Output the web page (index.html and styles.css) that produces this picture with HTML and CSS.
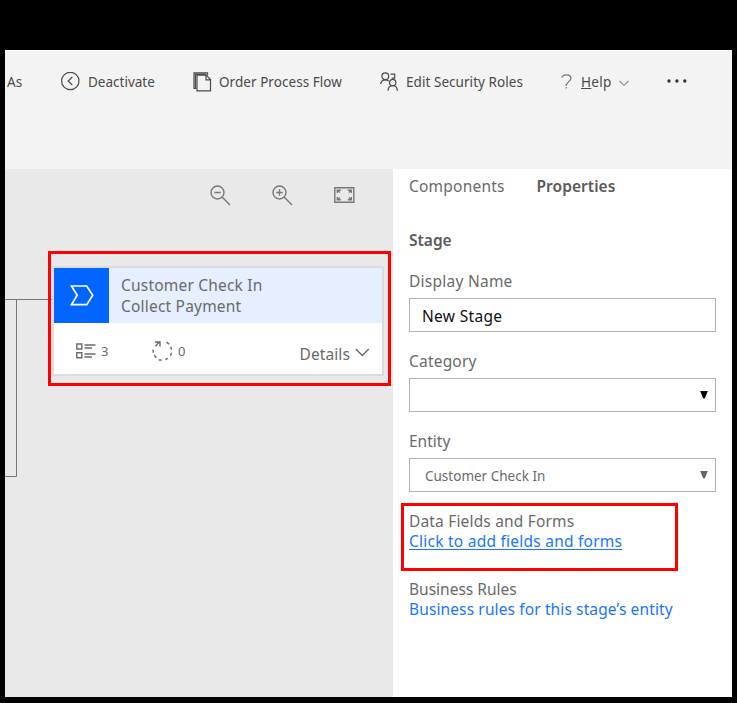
FILE: index.html
```html
<!DOCTYPE html>
<html lang="en">
<head>
<meta charset="utf-8">
<title>Business process flow</title>
<link rel="stylesheet" href="styles.css">
</head>
<body>
<div class="window">
  <header class="toolbar">
    <div class="command"><span class="t-as">As</span></div>
    <div class="command">
      <svg class="icon" width="20" height="20" viewBox="0 0 20 20"><circle cx="9.3" cy="9" r="8.7"/><path d="M11.3 5 7.2 9l4.1 4"/></svg>
      <span class="t-deactivate">Deactivate</span>
    </div>
    <div class="command">
      <svg class="icon" width="19" height="20" viewBox="0 0 19 20"><path d="M3.500 16.500H1V.8h13.500v2.400M2.500 16V2.300h10.500"/><path d="M4 18.500V3.200h9.200l4.300 4.300v11.300H4zM13 3.200v4.600h4.500"/></svg>
      <span class="t-order">Order Process Flow</span>
    </div>
    <div class="command">
      <svg class="icon" width="19" height="20" viewBox="0 0 19 20"><circle cx="5.3" cy="4.3" r="3.4"/><path d="M.7 12C1 9.500 2.800 7.800 5.300 7.800c1.500 0 2.500.4 3.400 1.300M10.500 2.200h4.200v4h-3"/><circle cx="12.700" cy="10.500" r="3.200"/><path d="M8 18.700c.2-3 2-5 4.700-5s4.500 2 4.700 5"/></svg>
      <span class="t-edit">Edit Security Roles</span>
    </div>
    <div class="command help">
      <svg class="icon soft" width="11" height="16" viewBox="0 0 11 16"><path d="M.8 3.600C1.500 1.700 3.200.8 5.300.8c2.700 0 4.600 1.400 4.600 3.500C9.900 7.800 5.200 7.500 5.200 12M5.200 13v1.500"/></svg>
      <span class="t-help"><u>H</u>elp</span>
      <svg class="icon faint" width="10" height="7" viewBox="0 0 10 7"><path d="m.5 1 4.500 4.500L9.500 1"/></svg>
    </div>
    <div class="command more"><svg width="21" height="4" viewBox="0 0 21 4"><circle cx="2" cy="2" r="1.700"/><circle cx="9.900" cy="2" r="1.700"/><circle cx="17.800" cy="2" r="1.700"/></svg></div>
  </header>
  <main class="workspace">
    <section class="canvas">
      <div class="zoom-tools">
        <svg class="icon" width="21" height="21" viewBox="0 0 21 21"><circle cx="7.500" cy="7.500" r="6.500"/><path d="M4.300 7.500h6.400M12.300 12.300l7.700 7.700"/></svg>
        <svg class="icon" width="21" height="21" viewBox="0 0 21 21"><circle cx="7.500" cy="7.500" r="6.500"/><path d="M4.300 7.500h6.400M7.500 4.300v6.400M12.300 12.300l7.700 7.700"/></svg>
        <svg class="icon fit" width="21" height="16" viewBox="0 0 21 16"><path d="M.8.800h19v14.400H.8z"/><path d="M3.300 6V3.300h3.500M3.300 3.300l2.500 2.200M13.800 3.300h3.500V6M17.300 3.300l-2.500 2.200M3.300 10v2.700h3.500M3.300 12.700l2.500-2.200M13.800 12.700h3.500V10M17.300 12.700l-2.500-2.200"/></svg>
      </div>
      <svg class="connector" width="48" height="179" viewBox="0 0 48 179"><path d="M0 .500h47M11.500.500v177H0"/></svg>
      <article class="stage">
        <div class="stage-head">
          <div class="stage-icon"><svg width="24" height="21" viewBox="0 0 24 21"><path d="M1.500 1h15.200l6 9.300-6 9.300H1.500l5.700-9.300z"/></svg></div>
          <div class="stage-name"><span class="t-check">Customer Check In</span><span class="t-collect">Collect Payment</span></div>
        </div>
        <div class="stage-foot">
          <svg class="icon steps" width="20" height="16" viewBox="0 0 20 16"><path d="M.8 1h5v5h-5zM.8 9.700h5v5h-5zM8.500 2h11M8.500 5h7.500M8.500 11h11M8.500 14h7.500"/></svg>
          <span class="count">3</span>
          <svg class="icon flow" width="21" height="21" viewBox="0 0 21 21"><path d="M3.500 6.300 7.600 1.500M3 2h5v4.500M14.500 2.100l2.700 2M18.700 6.700l.8 3M19.500 12.800l-1 3M15.800 18.300l-2.400 1.200M9.700 20H6.800M4.300 17.800l-2-2.500M1.300 12.700l-.2-3.200"/></svg>
          <span class="count">0</span>
          <span class="t-details">Details</span>
          <svg class="icon chevron" width="15" height="9" viewBox="0 0 15 9"><path d="m.8.900 6.500 6.500L13.800.900"/></svg>
        </div>
      </article>
      <div class="highlight highlight-stage"></div>
    </section>
    <aside class="panel">
      <nav class="tabs"><span class="t-components">Components</span><b class="t-properties">Properties</b></nav>
      <h2><span class="t-stage">Stage</span></h2>
      <label><span class="t-display">Display Name</span></label>
      <div class="field value"><span class="t-new">New Stage</span></div>
      <label><span class="t-category">Category</span></label>
      <div class="field"><i class="arrow"></i></div>
      <label><span class="t-entity">Entity</span></label>
      <div class="field entity"><span class="t-custom">Customer Check In</span><i class="arrow"></i></div>
      <div class="group">
        <span class="t-data">Data Fields and Forms</span>
        <a class="underlined t-click">Click to add fields and forms</a>
        <div class="highlight highlight-fields"></div>
      </div>
      <div class="group rules">
        <span class="t-business">Business Rules</span>
        <a class="t-rules">Business rules for this stage’s entity</a>
      </div>
    </aside>
  </main>
</div>
</body>
</html>
```
FILE: styles.css
```css
* { box-sizing: border-box; }
body {
  margin: 0;
  height: 703px;
  padding: 50px 5px 6px;
  overflow: hidden;
  background: #000;
  color: #6a6a6a;
  font: 15.5px/20px "Noto Sans", sans-serif;
}
span, b, a { white-space: nowrap; }
svg { display: block; flex: none; fill: none; }
.window { height: 647px; background: #fff; }
.icon { stroke: #6a6a6a; stroke-width: 1.4; }
.toolbar {
  display: grid;
  grid-template-columns: 54px 132px 187px 181px 106px 1fr;
  height: 119px;
  padding: 21px 0 0 2px;
  border-top: 1px solid #fff;
  background: #f3f3f3;
  color: #4a4a4a;
  font-size: 13.5px;
}
.command { display: flex; align-items: center; height: 20px; }
.command .icon { margin-right: 7px; stroke: #4a4a4a; stroke-width: 1.2; }
.command .soft { stroke: #777; margin-right: 9px; }
.help .faint { margin: 2px 0 0 7px; stroke: #999; }
.more svg { fill: #333; margin-top: -2px; }
.t-order, .t-edit { letter-spacing: .05px; }
.t-help { letter-spacing: .3px; }
.workspace { display: flex; height: 528px; }
.canvas { position: relative; width: 388px; background: #e9e9e9; }
.zoom-tools { display: flex; align-items: flex-start; gap: 41px; padding: 16px 0 0 205px; }
.zoom-tools .fit { margin: 2px 0 0; }
.zoom-tools .icon { stroke: #777; }
.connector { position: absolute; left: 0; top: 130px; stroke: #777; }
.stage {
  position: absolute;
  left: 49px;
  top: 99px;
  width: 328px;
  height: 106px;
  background: #fff;
  box-shadow: 0 0 0 2px #dcdcdc;
}
.stage-head { display: flex; height: 55px; background: #e5efff; }
.stage-icon { display: grid; place-items: center; width: 55px; background: #0066ff; }
.stage-icon svg { stroke: #fff; stroke-width: 1.7; }
.stage-name { display: flex; flex-direction: column; padding: 7px 0 0 12px; line-height: 20.5px; letter-spacing: .2px; }
.stage-foot { display: flex; align-items: center; height: 51px; padding: 4px 12px 0 22px; }
.stage-foot .count { font-size: 13px; width: 10px; }
.steps { margin-right: 5px; }
.flow { margin: 0 5px 0 41px; }
.t-details { margin-left: auto; margin-top: 6px; letter-spacing: .1px; }
.chevron { margin: 4px 0 0 5px; }
.highlight { position: absolute; border: 3px solid #f00; }
.highlight-stage { left: 43px; top: 82px; width: 343px; height: 135px; }
.panel { width: 339px; padding: 7px 16px 0; background: #fff; }
.tabs { display: flex; gap: 32px; height: 20px; }
.tabs b, h2 { font-weight: 600; color: #5a5a5a; }
.t-components { width: 95.5px; letter-spacing: .22px; }
.t-properties { letter-spacing: .05px; }
h2 { margin: 34px 0 21px; font-size: 15.5px; line-height: 20px; }
label { display: block; height: 20px; }
.t-display { letter-spacing: .25px; }
.t-category { letter-spacing: .2px; }
.t-new { letter-spacing: .32px; }
.t-data { letter-spacing: .17px; }
.t-click { letter-spacing: .24px; }
.t-rules { letter-spacing: .12px; }
.field {
  display: flex;
  align-items: center;
  justify-content: space-between;
  height: 34px;
  margin: 7px 0 19px;
  padding: 2px 7px 0 12px;
  border: 1px solid #b4b4b4;
}
.value { color: #111; }
.entity { padding-left: 15px; font-size: 13.5px; }
.arrow { width: 8px; height: 8px; margin: -3px 0 0 auto; background: #000; clip-path: polygon(0 0, 100% 0, 60% 100%, 40% 100%); }
.entity .arrow { background: #666; }
.group { position: relative; display: flex; flex-direction: column; align-items: flex-start; line-height: 20px; }
.rules { margin-top: 28px; }
a { color: #1a75ff; }
.underlined { text-decoration: underline; text-underline-offset: 2px; }
.highlight-fields { left: -8px; top: -8px; width: 277px; height: 68px; }
```
